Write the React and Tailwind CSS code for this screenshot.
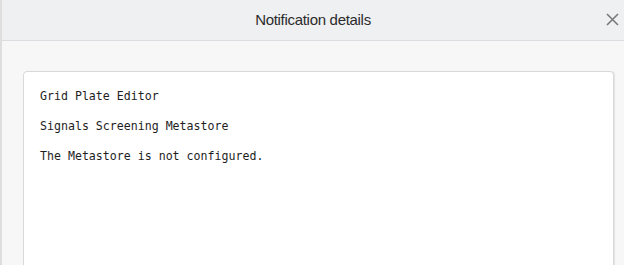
export default function App() {
    return (
        <div className="w-[624px] h-[265px] overflow-hidden bg-[#f7f7f7] border-l-2 border-[#dedede] flex flex-col">
            <div className="h-[41px] shrink-0 bg-[#eff0f2] border-b border-[#dcdde0] relative flex items-center justify-center">
                <span className="text-[15px] text-[#2b2b2b] tracking-[-0.3px]" style={{ fontFamily: '"Liberation Sans", Arial, sans-serif' }}>
                    Notification details
                </span>
                <svg className="absolute right-[5px] top-[13px]" width="13" height="13" viewBox="0 0 13 13">
                    <path d="M1 1 L12 12 M12 1 L1 12" stroke="#7a7a7a" strokeWidth="1.6" fill="none" />
                </svg>
            </div>
            <div className="flex-1 pt-[30px] pl-[21px] pr-[10px]">
                <div className="h-[220px] bg-white border border-[#d9d9dc] rounded-[4px] shadow-[1px_0_1px_rgba(0,0,0,0.08)] pt-[17px] pl-[16px] flex flex-col gap-[16px] text-[11.6px] leading-[14px] text-[#1e1e1e]" style={{ fontFamily: '"DejaVu Sans Mono", "Liberation Mono", monospace' }}>
                    <p>Grid Plate Editor</p>
                    <p>Signals Screening Metastore</p>
                    <p>The Metastore is not configured.</p>
                </div>
            </div>
        </div>
    )
}
